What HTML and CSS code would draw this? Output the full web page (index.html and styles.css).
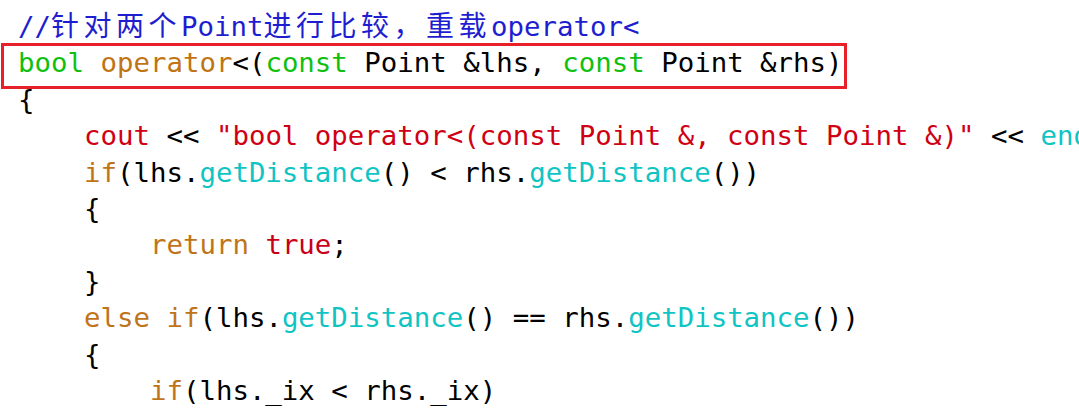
FILE: index.html
```html
<!DOCTYPE html>
<html lang="zh">
<head>
<meta charset="utf-8">
<title>operator&lt;</title>
<link rel="stylesheet" href="styles.css">
</head>
<body>
<div class="editor">
<pre class="code"><span class="cm">//<span class="cjk">针对两个</span>Point<span class="cjk">进行比较，重载</span>operator&lt;</span>
<span class="kw">bool</span> <span class="op">operator</span>&lt;(<span class="kw">const</span> Point &amp;lhs, <span class="kw">const</span> Point &amp;rhs)
{
    <span class="str">cout</span> &lt;&lt; <span class="str">"bool operator&lt;(const Point &amp;, const Point &amp;)"</span> &lt;&lt; <span class="fn">endl</span>;
    <span class="ctl">if</span>(lhs.<span class="fn">getDistance</span>() &lt; rhs.<span class="fn">getDistance</span>())
    {
        <span class="ctl">return</span> <span class="lit">true</span>;
    }
    <span class="ctl">else</span> <span class="ctl">if</span>(lhs.<span class="fn">getDistance</span>() == rhs.<span class="fn">getDistance</span>())
    {
        <span class="ctl">if</span>(lhs._ix &lt; rhs._ix)</pre>
<div class="highlight"></div>
</div>
</body>
</html>
```
FILE: styles.css
```css
html, body {
  margin: 0;
  padding: 0;
  background: #ffffff;
}
body {
  width: 1079px;
  height: 416px;
  overflow: hidden;
}
.editor {
  position: relative;
  width: 1079px;
  height: 416px;
  overflow: hidden;
}
.code {
  margin: 0;
  padding: 6px 0 0 18px;
  font-family: "DejaVu Sans Mono", "Liberation Mono", "Noto Sans CJK SC", monospace;
  font-size: 27.4px;
  line-height: 36.4px;
  color: #000000;
  white-space: pre;
}
.cjk {
  font-family: "Noto Sans CJK SC", sans-serif;
  font-size: 28px;
  letter-spacing: 4.5px;
}
.cm { color: #1e1ed0; }
.kw { color: #10c010; }
.op { color: #c07414; }
.ctl { color: #c0741a; }
.str { color: #d00014; }
.lit { color: #c80018; }
.fn { color: #10c4c4; }
.highlight {
  position: absolute;
  left: 1px;
  top: 43px;
  width: 846px;
  height: 46px;
  box-sizing: border-box;
  border: 3px solid #e8202a;
}
```
